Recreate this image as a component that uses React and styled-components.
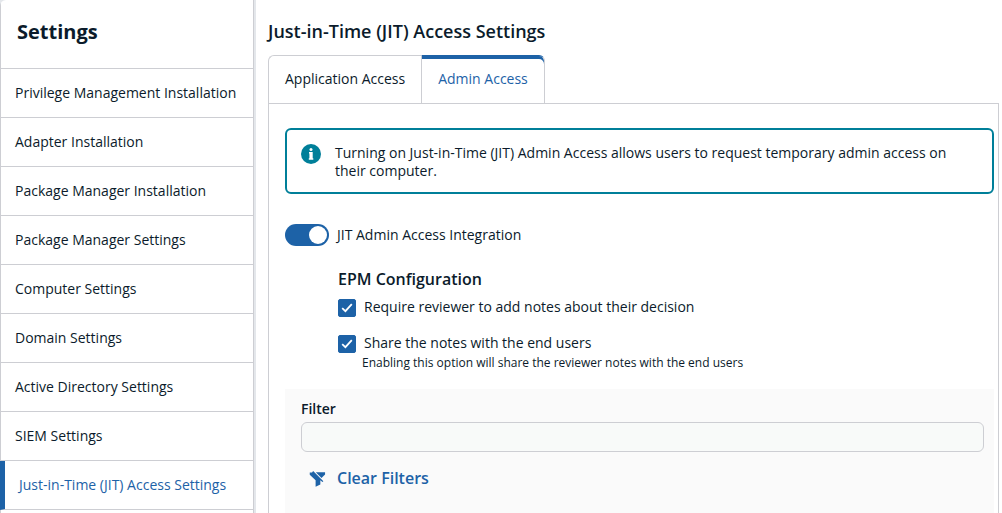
import React, { useState } from 'react';
import styled, { createGlobalStyle, css } from 'styled-components';


const colors = Object.freeze({
    TEXT: "#0b1b2b",
    BLUE: "#1d62a7",
    TEAL: "#007f99",
    BORDER: "#cdced3",
    GUTTER: "#e4e7eb",
    FILTER_BG: "#fafafa",
    INPUT_BG: "#f8faf9"
});

const MENU_ITEMS = [
    "Privilege Management Installation",
    "Adapter Installation",
    "Package Manager Installation",
    "Package Manager Settings",
    "Computer Settings",
    "Domain Settings",
    "Active Directory Settings",
    "SIEM Settings",
    "Just-in-Time (JIT) Access Settings"
];

const TABS = ["Application Access", "Admin Access"];


function CheckOption({ id, label, hint, checked, onChange }) {
    return (
        <Option>
            <CheckCell>
                <Checkbox id={id} checked={checked} onChange={event => onChange(event.target.checked)} />
                <CheckMark viewBox="0 0 18 18" aria-hidden="true">
                    <path d="M4.2 9.2 7.4 12.2 13.8 5.2" />
                </CheckMark>
            </CheckCell>
            <OptionLabel htmlFor={id}>{label}</OptionLabel>
            {hint && <Hint>{hint}</Hint>}
        </Option>
    );
}

function InfoIcon() {
    return (
        <InfoSvg viewBox="0 0 20 20" aria-hidden="true">
            <circle cx="10" cy="10" r="10" fill={colors.TEAL} />
            <circle cx="10" cy="5.4" r="1.5" fill="#fff" />
            <path d="M8 8h3.7v6.3h.6v1.5H7.8v-1.5h.6V9.4H8z" fill="#fff" />
        </InfoSvg>
    );
}

function ClearFilterIcon() {
    return (
        <FilterSvg viewBox="0 0 18 18" aria-hidden="true">
            <path d="M.8 2.6H3.2L4.4 1 15.2 11.8 14.2 12.8 12 10.8V15.4L7 17.8V10.8L.8 5z" />
            <path d="M7.2 2.4H17V4.8L13.2 8.4z" />
        </FilterSvg>
    );
}

function App() {
    const [page, setPage] = useState(MENU_ITEMS[8]);
    const [tab, setTab] = useState(TABS[1]);
    const [integration, setIntegration] = useState(true);
    const [requireNotes, setRequireNotes] = useState(true);
    const [shareNotes, setShareNotes] = useState(true);
    const [filter, setFilter] = useState("");

    return (
        <>
            <GlobalStyle />
            <Page>
                <Sidebar>
                    <SidebarTitle>Settings</SidebarTitle>
                    {MENU_ITEMS.map(item => (
                        <MenuLink key={item} href="#" $active={item === page} onClick={() => setPage(item)}>
                            {item}
                        </MenuLink>
                    ))}
                </Sidebar>
                <Main>
                    <Title>Just-in-Time (JIT) Access Settings</Title>
                    <TabList role="tablist">
                        {TABS.map(name => (
                            <Tab
                                key={name}
                                type="button"
                                role="tab"
                                aria-selected={name === tab}
                                $active={name === tab}
                                onClick={() => setTab(name)}
                            >
                                {name}
                            </Tab>
                        ))}
                    </TabList>
                    <Panel role="tabpanel">
                        <Notice>
                            <InfoIcon />
                            <NoticeText>
                                Turning on Just-in-Time (JIT) Admin Access allows users to request temporary admin access on their computer.
                            </NoticeText>
                        </Notice>
                        <SwitchRow>
                            <Switch
                                id="integration"
                                checked={integration}
                                onChange={event => setIntegration(event.target.checked)}
                            />
                            <label htmlFor="integration">JIT Admin Access Integration</label>
                        </SwitchRow>
                        <Configuration>
                            <ConfigurationTitle>EPM Configuration</ConfigurationTitle>
                            <CheckOption
                                id="require-notes"
                                label="Require reviewer to add notes about their decision"
                                checked={requireNotes}
                                onChange={setRequireNotes}
                            />
                            <CheckOption
                                id="share-notes"
                                label="Share the notes with the end users"
                                hint="Enabling this option will share the reviewer notes with the end users"
                                checked={shareNotes}
                                onChange={setShareNotes}
                            />
                        </Configuration>
                        <FilterBox>
                            <FilterLabel htmlFor="filter">Filter</FilterLabel>
                            <FilterInput id="filter" value={filter} onChange={event => setFilter(event.target.value)} />
                            <ClearButton type="button" onClick={() => setFilter("")}>
                                <ClearFilterIcon />
                                Clear Filters
                            </ClearButton>
                        </FilterBox>
                    </Panel>
                </Main>
            </Page>
        </>
    );
}

const GlobalStyle = createGlobalStyle`
    *, *::before, *::after {
        box-sizing: border-box;
    }

    body {
        margin: 0;
        background-color: ${colors.GUTTER};
        color: ${colors.TEXT};
        font: 14px/20px "Open Sans", "Noto Sans", sans-serif;
    }

    button, input {
        font: inherit;
        color: inherit;
    }
`;

const Page = styled.div`
    display: flex;
    gap: 2px;
    min-height: 100vh;
`;

const Sidebar = styled.nav`
    display: flex;
    flex-direction: column;
    flex: 0 0 254px;
    background: linear-gradient(to right, ${colors.BORDER} 1px, #fff 1px);
    border-right: 1px solid ${colors.BORDER};
    border-top-left-radius: 6px;
`;

const SidebarTitle = styled.h1`
    margin: 0;
    padding: 18px 17px 22px;
    border-bottom: 1px solid ${colors.BORDER};
    font-size: 20px;
    line-height: 28px;
    font-weight: 700;
`;

const MenuLink = styled.a`
    padding: 14px 15px;
    border-bottom: 1px solid ${colors.BORDER};
    color: inherit;
    text-decoration: none;

    ${props => props.$active && css`
        padding-left: 14px;
        border-left: 5px solid ${colors.BLUE};
        color: ${colors.BLUE};
    `}
`;

const Main = styled.main`
    display: flex;
    flex-direction: column;
    flex: 1;
    min-width: 0;
    padding: 19px 3px 0 12px;
    background-color: #fff;
`;

const Title = styled.h2`
    margin: 0 0 12px;
    font-size: 18px;
    line-height: 24px;
    font-weight: 600;
`;

const TabList = styled.div`
    display: flex;
    margin-bottom: -1px;
`;

const Tab = styled.button`
    height: 49px;
    padding: 0 16px 2px;
    border: 1px solid ${colors.BORDER};
    background-color: #fff;
    cursor: pointer;

    &:first-child {
        border-right: 0;
        border-top-left-radius: 6px;
    }

    &:last-child {
        border-top-right-radius: 6px;
    }

    ${props => props.$active && css`
        border-top-color: ${colors.BLUE};
        box-shadow: inset 0 3px ${colors.BLUE};
        color: ${colors.BLUE};
    `}
`;

const Panel = styled.section`
    display: flex;
    flex-direction: column;
    flex: 1;
    padding: 24px 4px 0 16px;
    border: 1px solid ${colors.BORDER};
    border-bottom: 0;
`;

const Notice = styled.div`
    display: flex;
    gap: 14px;
    padding: 14px 14px 12px;
    border: 2px solid ${colors.TEAL};
    border-radius: 6px;
`;

const InfoSvg = styled.svg`
    flex: none;
    width: 20px;
    height: 20px;
`;

const NoticeText = styled.p`
    margin: 0;
    padding-right: 16px;
    line-height: 18px;
`;

const SwitchRow = styled.div`
    display: flex;
    align-items: center;
    gap: 8px;
    margin-top: 30px;
`;

const Switch = styled.input.attrs({ type: "checkbox", role: "switch" })`
    appearance: none;
    display: flex;
    width: 44px;
    height: 22px;
    margin: 0;
    padding: 2px;
    border-radius: 11px;
    background-color: #8b929a;
    cursor: pointer;

    &::before {
        content: "";
        width: 18px;
        height: 18px;
        border-radius: 50%;
        background-color: #fff;
    }

    &:checked {
        justify-content: flex-end;
        background-color: ${colors.BLUE};
    }
`;

const Configuration = styled.div`
    margin: 21px 0 15px 53px;
`;

const ConfigurationTitle = styled.h3`
    margin: 0 0 6px;
    font-size: 16px;
    line-height: 24px;
    font-weight: 600;
`;

const Option = styled.div`
    display: grid;
    grid-template-columns: 18px 1fr;
    column-gap: 8px;

    & + & {
        margin-top: 16px;
    }
`;

const CheckCell = styled.span`
    display: grid;
    align-self: end;
    height: 18px;

    & > * {
        grid-area: 1 / 1;
    }
`;

const Checkbox = styled.input.attrs({ type: "checkbox" })`
    appearance: none;
    width: 18px;
    height: 18px;
    margin: 0;
    border: 1px solid ${colors.BLUE};
    border-radius: 2px;
    cursor: pointer;

    &:checked {
        background-color: ${colors.BLUE};
    }
`;

const CheckMark = styled.svg`
    width: 18px;
    height: 18px;
    fill: none;
    stroke: #fff;
    stroke-width: 1.8;
    pointer-events: none;
`;

const OptionLabel = styled.label`
    cursor: pointer;
`;

const Hint = styled.p`
    grid-column: 1 / -1;
    margin: 0;
    padding-left: 24px;
    font-size: 12px;
`;

const FilterBox = styled.div`
    flex: 1;
    margin-top: 1px;
    padding: 10px 10px 16px 16px;
    background-color: ${colors.FILTER_BG};
`;

const FilterLabel = styled.label`
    display: block;
    margin-bottom: 3px;
    font-size: 14px;
    font-weight: 600;
`;

const FilterInput = styled.input.attrs({ type: "text" })`
    display: block;
    width: 100%;
    height: 30px;
    padding: 0 8px;
    border: 1px solid ${colors.BORDER};
    border-radius: 6px;
    background-color: ${colors.INPUT_BG};
`;

const ClearButton = styled.button`
    display: flex;
    align-items: center;
    gap: 11px;
    margin-top: 14px;
    padding: 0 8px;
    border: 0;
    background: none;
    color: ${colors.BLUE};
    font-size: 16px;
    line-height: 24px;
    font-weight: 600;
    cursor: pointer;
`;

const FilterSvg = styled.svg`
    width: 17px;
    height: 17px;
    fill: currentColor;
`;

export default App;
